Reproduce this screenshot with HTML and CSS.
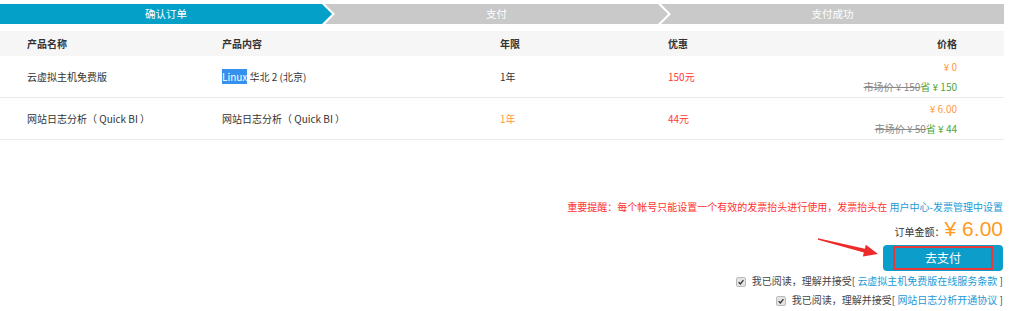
FILE: index.html
```html
<!DOCTYPE html>
<html lang="zh-CN">
<head>
    <meta charset="UTF-8">
    <title>确认订单</title>
    <link rel="stylesheet" href="styles.css">
</head>
<body>

<div class="page">
    <div class="steps">
        <div class="step step-first active">确认订单</div>
        <div class="step step-mid">支付</div>
        <div class="step step-last">支付成功</div>
    </div>

    <div class="order-table">
        <div class="row head">
            <div>产品名称</div>
            <div>产品内容</div>
            <div>年限</div>
            <div>优惠</div>
            <div class="price">价格</div>
        </div>
        <div class="row">
            <div>云虚拟主机免费版</div>
            <div><span class="hl">Linux</span> 华北 2 (北京)</div>
            <div>1年</div>
            <div class="red">150元</div>
            <div class="price">
                <div class="orange">¥ 0</div>
                <div><span class="market">市场价 ¥ 150</span><span class="green">省 ¥ 150</span></div>
            </div>
        </div>
        <div class="row">
            <div>网站日志分析（ Quick BI ）</div>
            <div>网站日志分析（ Quick BI ）</div>
            <div class="orange">1年</div>
            <div class="red">44元</div>
            <div class="price">
                <div class="orange">¥ 6.00</div>
                <div><span class="market">市场价 ¥ 50</span><span class="green">省 ¥ 44</span></div>
            </div>
        </div>
    </div>

    <div class="actions">
        <p class="notice">重要提醒：每个帐号只能设置一个有效的发票抬头进行使用，发票抬头在 <a href="#">用户中心-发票管理中设置</a></p>
        <div class="total">订单金额：<span class="amount">¥ 6.00</span></div>
        <button class="pay"><span>去支付</span></button>
        <label class="agree"><span class="box"><svg viewBox="0 0 10 10"><path d="M2 5.2 L4.2 7.4 L8 2.6" fill="none" stroke="#333" stroke-width="1.6"/></svg></span>我已阅读，理解并接受[ <a href="#">云虚拟主机免费版在线服务条款</a> ]</label>
        <label class="agree"><span class="box"><svg viewBox="0 0 10 10"><path d="M2 5.2 L4.2 7.4 L8 2.6" fill="none" stroke="#333" stroke-width="1.6"/></svg></span>我已阅读，理解并接受[ <a href="#">网站日志分析开通协议</a> ]</label>

        <svg class="pointer" width="66" height="24" viewBox="0 0 66 24">
            <polygon points="3,3.3 49.9,13.7 50.9,9.8 63,19 47.9,21.4 48.9,17.5 3,4.7" fill="#ee2b2b"/>
        </svg>
    </div>
</div>

</body>
</html>
```

FILE: styles.css
```css
/* Global Styles */
* {
    margin: 0;
    padding: 0;
    box-sizing: border-box;
}

body {
    font-family: "Noto Sans CJK SC", "Liberation Sans", sans-serif;
    font-size: 10px;
    color: #333;
    background: #fff;
}

a {
    color: #1c9ad6;
    text-decoration: none;
}

.page {
    width: 1004px;
    padding-top: 4px;
}

/* Steps */
.steps {
    display: flex;
    height: 20px;
}

.step {
    height: 20px;
    line-height: 20px;
    text-align: center;
    color: #fff;
    font-size: 10.5px;
    background: #c9c9c9;
}

.step.active {
    background: #05a0c8;
}

.step-first {
    width: 332px;
    clip-path: polygon(0 0, 322px 0, 100% 50%, 322px 100%, 0 100%);
}

.step-mid {
    width: 343px;
    margin-left: -7px;
    clip-path: polygon(0 0, 333px 0, 100% 50%, 333px 100%, 0 100%, 10px 50%);
}

.step-last {
    width: 343px;
    margin-left: -7px;
    clip-path: polygon(0 0, 100% 0, 100% 100%, 0 100%, 10px 50%);
}

/* Table */
.order-table {
    margin-top: 7px;
}

.row {
    display: grid;
    grid-template-columns: 195px 278px 168px 1fr 100px;
    align-items: center;
    padding: 0 47px 0 27px;
    height: 42px;
    border-bottom: 1px solid #e9e9e9;
}

.row.head {
    height: 25px;
    background: #f6f6f6;
    border-bottom: none;
    font-weight: bold;
    color: #333;
}

.price {
    text-align: right;
    line-height: 20px;
}

.hl {
    background: #3590ee;
    color: #fff;
}

.red {
    color: #ff3737;
}

.orange {
    color: #ff9a3a;
}

.green {
    color: #4ea53a;
}

.market {
    color: #888;
    text-decoration: line-through;
}

/* Actions */
.actions {
    position: relative;
    display: flex;
    flex-direction: column;
    align-items: flex-end;
    padding-right: 1px;
    margin-top: 60px;
}

.notice {
    color: #ff3030;
    line-height: 14px;
}

.total {
    height: 30px;
    line-height: 30px;
    color: #333;
}

.amount {
    font-family: "Liberation Sans", sans-serif;
    font-size: 21px;
    color: #ff9a1a;
}

.pay {
    width: 120px;
    height: 26px;
    margin-top: 1px;
    padding: 1px 10px;
    background: #0c9dcb;
    border: none;
    border-radius: 4px;
    font-family: inherit;
    cursor: pointer;
}

.pay span {
    display: block;
    height: 24px;
    line-height: 20px;
    border: 2px solid #e8383a;
    color: #fff;
    font-size: 12px;
}

.agree {
    display: block;
    height: 19px;
    line-height: 19px;
    color: #444;
}

.box {
    display: inline-flex;
    width: 10px;
    height: 10px;
    margin-right: 6px;
    vertical-align: -1px;
    background: #e4e4e4;
    border: 1px solid #bbb;
    border-radius: 2px;
    align-items: center;
    justify-content: center;
}

.box svg {
    width: 8px;
    height: 8px;
}

.pointer {
    position: absolute;
    left: 815px;
    top: 35px;
}
```
